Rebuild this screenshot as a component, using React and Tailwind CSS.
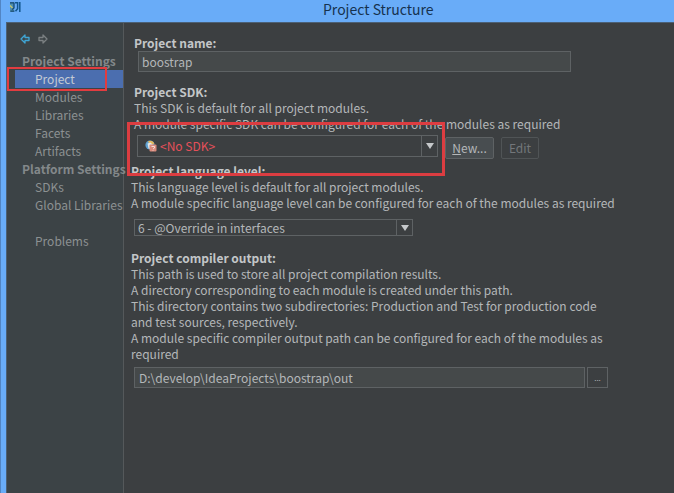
import React, { useState } from "react";

const projectItems = ["Project", "Modules", "Libraries", "Facets", "Artifacts"];
const platformItems = ["SDKs", "Global Libraries"];

function AppIcon() {
  return (
    <svg width="12" height="12" viewBox="0 0 12 12" fill="none">
      <path d="M1 1h4v10H1z" fill="#4d8fb0" />
      <path d="M1 1.8h4.4M1.5 10.2h4M5 2v5L3 8.5" stroke="#174a73" strokeWidth="1.3" />
      <path d="M1 4.5l2.5 2.5" stroke="#c5c76f" strokeWidth="1.2" />
      <path d="M6 1.8h2.6v6L6.5 10.2M10.8 1v10" stroke="#12568c" strokeWidth="1.5" />
    </svg>
  );
}

function NavArrow({ color, flip }) {
  return (
    <svg width="10" height="10" viewBox="0 0 10 10" fill="none" className={flip ? "rotate-180" : ""}>
      <path d="M1 5l4-4v2.5h4v3H5V9z" stroke={color} strokeWidth="1.3" strokeLinejoin="round" />
    </svg>
  );
}

function SdkIcon() {
  return (
    <svg width="12" height="12" viewBox="0 0 12 12" fill="none">
      <circle cx="5" cy="5" r="4.6" fill="#5d9fd0" />
      <path d="M3 1.2a4.6 4.6 0 0 1 6.4 2.6L5 5z" fill="#e4b75a" />
      <path d="M2.5 3.5l3-1 3 3-2 4-3-1z" fill="#dfe7e8" />
      <rect x="4.5" y="4.5" width="7" height="7" rx="1" fill="#d98a7c" />
      <path d="M6.5 6.5h3V8L8 9M8 10v.6" stroke="#f5dcd8" strokeWidth="1" />
    </svg>
  );
}

function NavItem({ label, active, onSelect }) {
  return (
    <li className="relative">
      <button
        onClick={() => onSelect(label)}
        className={
          active
            ? "ml-2 block h-[18px] w-[108px] bg-[#4b6eaf] pl-5 text-left text-[#c3cad4]"
            : "ml-2 block h-[18px] w-[108px] pl-5 text-left whitespace-nowrap text-[#8c9192]"
        }
      >
        {label}
      </button>
      {active && (
        <span className="pointer-events-none absolute -top-[3px] left-0 h-6 w-[100px] border-2 border-[#e23c40]" />
      )}
    </li>
  );
}

function Sidebar() {
  const [current, setCurrent] = useState("Project");

  return (
    <nav className="w-[117px] shrink-0 border-r border-[#55595b] bg-[#3c4346] pt-[11px] leading-[18px]">
      <div className="flex h-[18px] items-start gap-2 pl-[13px]">
        <button aria-label="Back" className="block">
          <NavArrow color="#3fa6d6" />
        </button>
        <button aria-label="Forward" className="block">
          <NavArrow color="#7b8082" flip />
        </button>
      </div>
      <h2 className="pl-[15px] font-bold whitespace-nowrap text-[#83888a]">Project Settings</h2>
      <ul>
        {projectItems.map((item) => (
          <NavItem key={item} label={item} active={item === current} onSelect={setCurrent} />
        ))}
      </ul>
      <h2 className="pl-[15px] font-bold whitespace-nowrap text-[#83888a]">Platform Settings</h2>
      <ul>
        {platformItems.map((item) => (
          <NavItem key={item} label={item} active={item === current} onSelect={setCurrent} />
        ))}
      </ul>
      <ul className="mt-[18px]">
        <NavItem label="Problems" active={current === "Problems"} onSelect={setCurrent} />
      </ul>
    </nav>
  );
}

function SelectArrow() {
  return (
    <span className="pointer-events-none absolute inset-y-0 right-0 flex w-[17px] items-center justify-center border-l border-[#5e6264]">
      <svg width="8" height="8" viewBox="0 0 8 8">
        <path d="M0 1h8L4 7z" fill="#c5c8ca" />
      </svg>
    </span>
  );
}

function App() {
  const [name, setName] = useState("boostrap");
  const [output, setOutput] = useState("D:\\develop\\IdeaProjects\\boostrap\\out");

  return (
    <div className="flex min-h-screen flex-col border-l border-[#5285c4] bg-[#69acf8] font-['Noto_Sans_CJK_SC','Open_Sans',sans-serif] text-xs">
      <header className="flex h-[22px] items-start pt-px pl-2">
        <AppIcon />
        <h1 className="grow pl-[302px] text-sm leading-4 text-[#16324f]">Project Structure</h1>
      </header>

      <div className="ml-[5px] flex grow border-t border-l border-[#4c6075] bg-[#3c3f41]">
        <Sidebar />

        <main className="grow pt-3 pl-[7px] leading-4 text-[#b4b7b9]">
          <section className="pl-[3px]">
            <label htmlFor="name" className="block font-bold text-[#c3c6c8]">
              Project name:
            </label>
            <input
              id="name"
              value={name}
              onChange={(e) => setName(e.target.value)}
              className="ml-1 block h-[21px] w-[433px] border border-[#5e6264] bg-[#45494a] px-[3px]"
            />
          </section>

          <section className="relative mt-3 pl-[3px]">
            <label htmlFor="sdk" className="block font-bold text-[#c3c6c8]">
              Project SDK:
            </label>
            <p>This SDK is default for all project modules.</p>
            <p>A module specific SDK can be configured for each of the modules as required</p>
            <div className="mt-[3px] flex items-start pl-[3px]">
              <div className="relative w-[301px]">
                <select
                  id="sdk"
                  className="block h-[22px] w-full appearance-none border border-[#5e6264] bg-[#3c3f41] pl-[22px] text-[#e5505a]"
                >
                  <option>&lt;No SDK&gt;</option>
                </select>
                <span className="pointer-events-none absolute top-[5px] left-2">
                  <SdkIcon />
                </span>
                <SelectArrow />
              </div>
              <button className="mt-[2px] ml-[7px] h-[22px] w-[49px] rounded-xs border border-[#5e6264] bg-[#484d50]">
                <span className="underline">N</span>ew...
              </button>
              <button
                disabled
                className="mt-[2px] ml-[7px] h-[22px] w-[38px] rounded-xs border border-[#505456] text-[#73777a]"
              >
                Edit
              </button>
            </div>
            <div className="pointer-events-none absolute top-[38px] -left-1 h-[54px] w-[318px] border-[3px] border-[#dc3d41]" />
          </section>

          <section className="mt-1">
            <label htmlFor="level" className="block font-bold text-[#c3c6c8]">
              Project language level:
            </label>
            <p>This language level is default for all project modules.</p>
            <p>A module specific language level can be configured for each of the modules as required</p>
            <div className="relative mt-2 ml-[3px] w-[279px]">
              <select
                id="level"
                className="block h-[17px] w-full appearance-none border border-[#5e6264] bg-[#3c3f41] pl-[3px] leading-[15px]"
              >
                <option>6 - @Override in interfaces</option>
              </select>
              <SelectArrow />
            </div>
          </section>

          <section className="mt-[14px]">
            <label htmlFor="output" className="block font-bold text-[#c3c6c8]">
              Project compiler output:
            </label>
            <p>This path is used to store all project compilation results.</p>
            <p>A directory corresponding to each module is created under this path.</p>
            <p>
              This directory contains two subdirectories: Production and Test for production code
              <br />
              and test sources, respectively.
            </p>
            <p>
              A module specific compiler output path can be configured for each of the modules as
              <br />
              required
            </p>
            <div className="mt-[5px] ml-[3px] flex gap-[2px]">
              <input
                id="output"
                value={output}
                onChange={(e) => setOutput(e.target.value)}
                className="h-[21px] w-[451px] border border-[#5e6264] bg-[#45494a] px-1"
              />
              <button className="h-[21px] w-[21px] border border-[#5e6264] text-[8px] leading-3">...</button>
            </div>
          </section>
        </main>
      </div>
    </div>
  );
}

export default App;
